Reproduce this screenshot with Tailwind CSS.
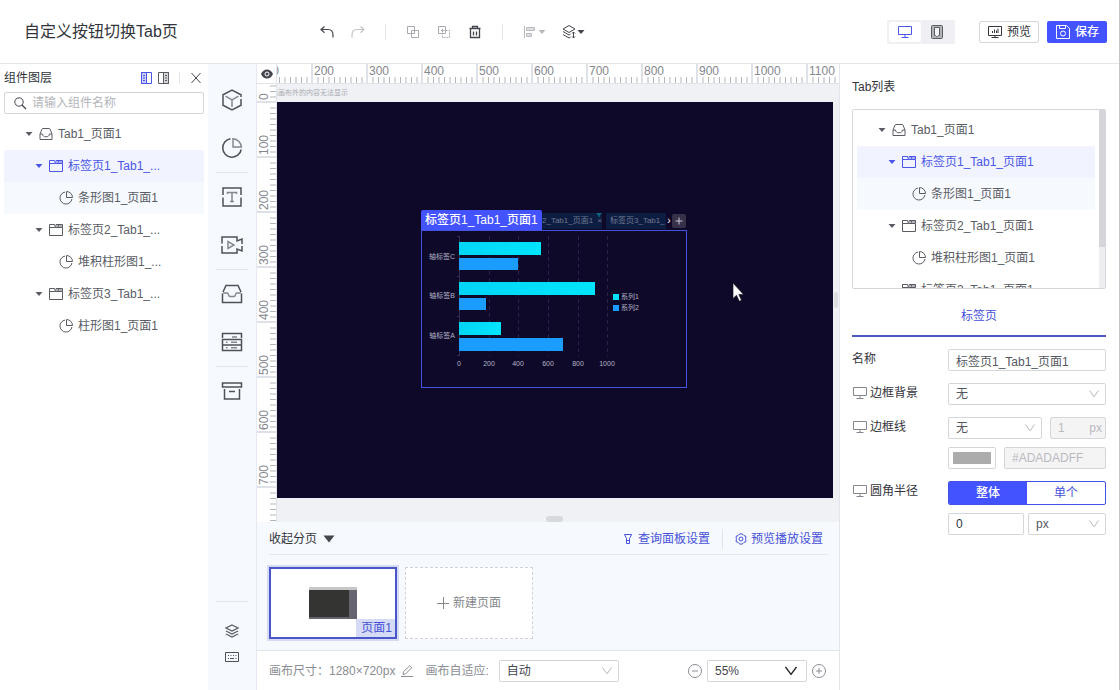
<!DOCTYPE html>
<html lang="zh-CN">

<head>
    <meta charset="UTF-8" />
    <meta name="viewport" content="width=device-width, initial-scale=1.0" />
    <title>自定义按钮切换Tab页</title>
    <script src="https://cdn.jsdelivr.net/npm/@tailwindcss/browser@4"></script>
</head>

<body class="bg-white">
    <svg class="hidden">
        <symbol id="i-caret" viewBox="0 0 8 8"><path d="M0.5 2h7L4 6z" fill="currentColor" /></symbol>
        <symbol id="i-down" viewBox="0 0 12 12"><path d="M1.500 2.500 6 8.800l4.500-6.300" fill="none" stroke="currentColor" /></symbol>
        <symbol id="i-tab" viewBox="0 0 14 14">
            <path d="M1 7v5.500h12V7M1 7l2-5c.2-.4.500-.5.900-.5h6.200c.4 0 .7.100.9.500l2 5M1 7h2.500c.3 2 1.500 2.800 3.500 2.800s3.200-.8 3.500-2.800H13" fill="none" stroke="currentColor" />
        </symbol>
        <symbol id="i-folder" viewBox="0 0 14 14">
            <path d="M5.500 1.500h8v3h-7z" fill="currentColor" opacity=".45" />
            <path d="M.5 12.500v-11h5l1 3h7v8zM.5 4.500h6M7 1.500h6.500v3M9.500 1.500v2" fill="none" stroke="currentColor" />
        </symbol>
        <symbol id="i-pie" viewBox="0 0 14 14">
            <path d="M6 1.100A6 6 0 1 0 12.900 8M7.500.5v6h6a6 6 0 0 0-6-6z" fill="none" stroke="currentColor" />
        </symbol>
        <symbol id="i-screen" viewBox="0 0 14 14">
            <path d="M.5 1.500h13v8H.5zM7 9.500v3M3.500 12.500h7" fill="none" stroke="currentColor" />
        </symbol>
        <symbol id="i-stack" viewBox="0 0 14 14">
            <path d="M7 1 13 4 7 7 1 4zM1 7l6 3 6-3M1 10l6 3 6-3" fill="none" stroke="currentColor" stroke-width="1.200" />
        </symbol>
    </svg>

    <div class="flex h-screen flex-col overflow-hidden border-r border-[#c4c5cb] font-['Liberation_Sans','Noto_Sans_CJK_SC',sans-serif] text-xs text-[#5a5c64]">
        <header class="flex h-16 shrink-0 items-center border-b border-[#e4e5ea]">
            <h1 class="w-[319px] pl-6 text-base text-[#33343c]">自定义按钮切换Tab页</h1>
            <div class="flex items-center gap-[15px]">
                <button aria-label="撤销"><svg class="size-4" viewBox="0 0 16 16" fill="none" stroke="#44464e" stroke-width="1.200"><path d="M5.500 2.500 2 5.500l3.500 3.200M2 5.500h7c3.500 0 5 2 5 5.500v2.500" /></svg></button>
                <button aria-label="重做"><svg class="size-4" viewBox="0 0 16 16" fill="none" stroke="#c3c4c8" stroke-width="1.200"><path d="M10.500 2.500 14 5.500l-3.500 3.200M14 5.500H7c-3.500 0-5 2-5 5.500v2.500" /></svg></button>
                <span class="mx-1 h-4 w-px bg-[#e4e5ea]"></span>
                <button aria-label="组合"><svg class="size-4" viewBox="0 0 16 16" fill="none" stroke="#a9abb0"><path d="M2.500 2.500h7v7h-7zM6.500 6.500h7v7h-7z" /></svg></button>
                <button aria-label="取消组合"><svg class="size-4" viewBox="0 0 16 16" fill="none" stroke="#a9abb0"><path d="M2.500 2.500h7v7h-7zM6.500 5v3.500M5 6.500h3.500" /><path d="M9.500 6.500h4v7h-7v-4" stroke-dasharray="2 1" /></svg></button>
                <button aria-label="删除"><svg class="size-4" viewBox="0 0 16 16" fill="none" stroke="#44464e" stroke-width="1.300"><path d="M2.500 4.500h11M5.500 4V2.500h5V4M3.500 5v8.500h9V5M6.500 7.500v4M9.500 7.500v4" /></svg></button>
                <span class="mx-1 h-4 w-px bg-[#e4e5ea]"></span>
                <button aria-label="对齐" class="flex w-6 items-center text-[#b9babf]"><svg class="size-4 shrink-0" viewBox="0 0 16 16" fill="none" stroke="currentColor"><path d="M2.500 2v12" /><path d="M4.500 3.500h8v3h-8zM4.500 9.500h5v3h-5z" fill="#dcdde0" /></svg><svg class="size-2 shrink-0"><use href="#i-caret" /></svg></button>
                <button aria-label="图层顺序" class="flex w-6 items-center text-[#44464e]"><svg class="size-4 shrink-0" viewBox="0 0 16 16" fill="none" stroke="currentColor"><path d="M8 1.500 14 5 8 8.500 2 5zM2 7.500 8 11l1.500-.8M2 10.500 8 14l1.500-.8M12.500 8v6M11 9.500 12.500 8 14 9.500M11 12.500l1.500 1.500 1.500-1.500" /></svg><svg class="size-2 shrink-0"><use href="#i-caret" /></svg></button>
            </div>
            <div class="ml-auto flex items-center pr-3">
                <div class="mr-6 flex rounded-xs bg-[#f0f0f4] p-0.5">
                    <button aria-label="电脑端" class="flex h-5 w-8 items-center justify-center rounded-xs bg-white text-[#4b56e8]"><svg class="size-3.5"><use href="#i-screen" /></svg></button>
                    <button aria-label="移动端" class="flex h-5 w-8 items-center justify-center"><svg class="h-4 w-3.5" viewBox="0 0 14 16"><rect x="1.500" y="1.500" width="11" height="13" rx="1" fill="#b2b3b8" stroke="#5a5c64" /><path d="M4.500 3.500h5v8h-1l-1 1h-1l-1-1h-1z" fill="#f4f4f6" stroke="#5a5c64" /></svg></button>
                </div>
                <button class="mr-2 flex h-[22px] w-[60px] items-center justify-center gap-1 rounded-xs border border-[#d5d6dc] text-[#33343c]"><svg class="size-4" viewBox="0 0 16 16" fill="none" stroke="currentColor"><path d="M1.500 2.500h13v9h-13zM8 11.500v2M4.500 13.500h7M5.500 9V7M7.500 9V5.500M9.500 9V6.500M11 9V4.500" /></svg>预览</button>
                <button class="flex h-[22px] w-[60px] items-center justify-center gap-1 rounded-xs bg-[#4353ff] font-medium text-white"><svg class="size-4" viewBox="0 0 16 16" fill="none" stroke="currentColor"><path d="M1.500 1.500h10l3 3v10h-13zM4.500 1.500v3h6v-3" /><circle cx="8" cy="9.500" r="2.500" /></svg>保存</button>
            </div>
        </header>

        <main class="flex min-h-0 flex-1">
            <aside class="w-52 shrink-0 px-1">
                <div class="flex h-7 items-center">
                    <h2 class="flex-1 text-[#33343c]">组件图层</h2>
                    <button aria-label="左侧停靠" class="mr-1.5"><svg class="h-3 w-[11px]" viewBox="0 0 11 12" fill="none" stroke="#4b56e8"><path d="M.5.5h5v11h-5z" fill="#c9cdf8" /><path d="M.5.5h10v11H.5zM5.500.5v11M2 3.500h2M2 6h2M2 8.500h2" /></svg></button>
                    <button aria-label="右侧停靠" class="mr-2.5"><svg class="h-3 w-[11px]" viewBox="0 0 11 12" fill="none" stroke="#5a5c64"><path d="M5.500.5h5v11h-5z" fill="#d5d5d8" /><path d="M.5.5h10v11H.5zM5.500.5v11M7 3.500h2M7 6h2M7 8.500h2" /></svg></button>
                    <span class="mr-2.5 h-3 w-px bg-[#e4e5ea]"></span>
                    <button aria-label="关闭" class="mr-0.5"><svg class="size-3" viewBox="0 0 12 12" fill="none" stroke="#44464e"><path d="m1.500 1 9 10M10.500 1l-9 10" /></svg></button>
                </div>
                <label class="flex h-[22px] items-center gap-[5px] rounded-xs border border-[#d5d6dc] pl-2">
                    <svg class="size-3.5 shrink-0" viewBox="0 0 14 14" fill="none" stroke="#44464e"><circle cx="6" cy="6" r="4.200" /><path d="m9 9 4 4" stroke-width="1.300" /></svg>
                    <input class="w-full outline-none placeholder:text-[#b4b5ba]" placeholder="请输入组件名称" aria-label="搜索组件" />
                </label>
                <ul class="mt-1 [&>li]:flex [&>li]:h-8 [&>li]:items-center">
                    <li class="pl-[21px]"><svg class="mr-1.5 size-2"><use href="#i-caret" /></svg><svg class="mr-[5px] size-3.5"><use href="#i-tab" /></svg>Tab1_页面1</li>
                    <li class="bg-[#f1f4fe] pl-[31px] text-[#4b56e8]"><svg class="mr-1.5 size-2"><use href="#i-caret" /></svg><svg class="mr-[5px] size-3.5"><use href="#i-folder" /></svg>标签页1_Tab1_...</li>
                    <li class="bg-[#f6f9fe] pl-[55px]"><svg class="mr-[5px] size-3.5"><use href="#i-pie" /></svg>条形图1_页面1</li>
                    <li class="pl-[31px]"><svg class="mr-1.5 size-2"><use href="#i-caret" /></svg><svg class="mr-[5px] size-3.5"><use href="#i-folder" /></svg>标签页2_Tab1_...</li>
                    <li class="pl-[55px]"><svg class="mr-[5px] size-3.5"><use href="#i-pie" /></svg>堆积柱形图1_...</li>
                    <li class="pl-[31px]"><svg class="mr-1.5 size-2"><use href="#i-caret" /></svg><svg class="mr-[5px] size-3.5"><use href="#i-folder" /></svg>标签页3_Tab1_...</li>
                    <li class="pl-[55px]"><svg class="mr-[5px] size-3.5"><use href="#i-pie" /></svg>柱形图1_页面1</li>
                </ul>
            </aside>

            <nav class="flex w-[49px] shrink-0 flex-col border-r border-[#e6e9f1] bg-[#f6fafe] pt-3 pb-5 [&>button]:flex [&>button]:items-center [&>button]:justify-center">
                <button aria-label="组件" class="h-12"><svg class="size-[22px]" viewBox="0 0 22 22" fill="none" stroke="#4f5159" stroke-width="1.500"><path d="M20 8V5.800L11 1 2 5.800v10.400L11 21l9-4.800V10" /><path d="m4.500 7.200 6.500 3.600 6.500-3.600M11 10.800V18" stroke="#85878e" /></svg></button>
                <button aria-label="图表" class="h-12"><svg class="size-[22px]" viewBox="0 0 22 22" fill="none" stroke="#4f5159" stroke-width="1.500"><path d="M9.500 1.700A9.300 9.300 0 1 0 20.200 12.500" /><path d="M12 1.700V10h8.300A9 9 0 0 0 12 1.700z" stroke="#85878e" /></svg></button>
                <span class="mx-2 h-px shrink-0 bg-[#e1e4ea]"></span>
                <button aria-label="文本" class="h-12"><svg class="size-[22px]" viewBox="0 0 22 22" fill="none" stroke="#4f5159" stroke-width="1.500"><path d="M2 9V2h18v7M2 11.500V20h18v-8.500" /><path d="M6.500 8V6.500h9V8M11 6.500v9M9 15.500h4" stroke="#85878e" /></svg></button>
                <button aria-label="媒体" class="h-12"><svg class="size-[22px]" viewBox="0 0 22 22" fill="none" stroke="#4f5159" stroke-width="1.500"><path d="M1 9.500V3h15v4l5-2v5M1 12v7h15v-4l5 2v-5" /><path d="M7 7.500v7l6-3.500z" stroke="#85878e" /></svg></button>
                <span class="mx-2 h-px shrink-0 bg-[#e1e4ea]"></span>
                <button aria-label="容器" class="h-12"><svg class="size-[22px]" viewBox="0 0 22 22" fill="none" stroke="#4f5159" stroke-width="1.500"><path d="M2 9l3-6.500h12L20 9M1.500 10.500v9h19v-9" /><path d="M2 10h4.500c.7 0 1 3.500 2.500 3.500h4c1.500 0 1.800-3.500 2.500-3.500H20" stroke="#85878e" /></svg></button>
                <button aria-label="控件" class="h-12"><svg class="size-[22px]" viewBox="0 0 22 22" fill="none" stroke="#4f5159" stroke-width="1.500"><path d="M1.500 7V2.500h19V7M1.500 8.500h19v5.500h-19zM1.500 14v5.500h19V14" /><path d="M11 6h5M5 11.300h1.500M10 11.300h6M5 16.800h1.500M10 16.800h6" stroke="#85878e" /></svg></button>
                <span class="mx-2 h-px shrink-0 bg-[#e1e4ea]"></span>
                <button aria-label="素材" class="h-12"><svg class="size-[22px]" viewBox="0 0 22 22" fill="none" stroke="#4f5159" stroke-width="1.500"><path d="M1.500 3h19v4h-19zM3.500 9v10h15V9M8 11.500h6" /></svg></button>
                <span class="mx-2 mt-auto mb-4 h-px shrink-0 bg-[#e1e4ea]"></span>
                <button aria-label="图层" class="h-[26px]"><svg class="size-3.5"><use href="#i-stack" /></svg></button>
                <button aria-label="快捷键" class="h-[26px]"><svg class="h-2.5 w-3.5" viewBox="0 0 14 10" fill="none" stroke="#4f5159"><path d="M.5 .5h13v9H.5zM3 3.500h1M5.500 3.500h1M8 3.500h1M10.500 3.500h1M3 6.500h1M5 6.500h4M10.500 6.500h1" /></svg></button>
            </nav>

            <section class="flex min-w-0 flex-1 flex-col border-r border-[#e4e5ea]">
                <div class="grid min-h-0 flex-1 grid-cols-[20px_minmax(0,1fr)] grid-rows-[20px_minmax(0,1fr)]">
                    <button aria-label="显示参考线" class="flex items-center justify-center border-r border-b border-[#e1e3ea]"><svg class="h-3 w-3.5" viewBox="0 0 14 12"><path d="M1 6c2.500-6 9.500-6 12 0-2.500 6-9.500 6-12 0z" fill="#44464e" /><circle cx="7" cy="6" r="2" fill="none" stroke="#fff" /></svg></button>
                    <svg id="ruler-x" class="h-full w-full border-b border-[#e1e3ea] text-xs"></svg>
                    <svg id="ruler-y" class="h-full w-full border-r border-[#e1e3ea] text-xs"></svg>

                    <div class="relative flex min-w-0 flex-col bg-[#eff1f5] pr-1.5 pb-6">
                        <div class="flex h-[18px] w-[71px] items-center justify-end overflow-hidden text-[7px] whitespace-nowrap text-[#aaabb0]">出画布外的内容无法显示</div>
                        <div class="relative flex-1 bg-[#0f0929]">
                            <!-- tab strip of the selected widget -->
                            <div class="absolute top-[111px] left-[265px] flex h-4 items-center text-[8px] whitespace-nowrap text-[#6f7890]">
                                <span class="relative flex h-full w-[60px] items-center justify-between bg-[#0d1d42]">2_Tab1_页面1<span>×</span><svg class="absolute top-0 right-0 size-1.5" viewBox="0 0 8 8"><path d="M0 0h8L5 3v3L3 4.500V3z" fill="#0e6a80" /></svg></span>
                                <span class="ml-1 flex h-full w-[60px] items-center bg-[#0d1d42] pl-1">标签页3_Tab1_</span>
                                <span class="w-1.5 text-center text-[10px] text-white">›</span>
                                <button aria-label="新增标签页" class="flex size-3.5 items-center justify-center rounded-xs bg-[#373049] text-[#c7c5d0]"><svg class="size-2" viewBox="0 0 8 8" stroke="currentColor"><path d="M4 .5v7M.5 4h7" /></svg></button>
                            </div>
                            <div class="absolute top-[108px] left-36 flex h-5 items-center rounded-t-xs bg-[#4353ff] px-1 font-medium whitespace-nowrap text-white">标签页1_Tab1_页面1</div>
                            <div class="absolute top-32 left-36 border border-[#4353e0]">
                                <svg class="h-[156px] w-[264px]" viewBox="1 1 264 156" font-size="7" fill="#b3b5c6">
                                    <path d="M68.500 6v120M97.500 6v120M127.500 6v120M157.500 6v120M186.500 6v120" stroke="#25244a" stroke-dasharray="4 3" />
                                    <path d="M38.500 6v120M36 6.500h2M36 46.500h2M36 86.500h2M36 125.500h2" stroke="#2f2e52" />
                                    <defs>
                                        <linearGradient id="g1"><stop stop-color="#02d5f7" /><stop offset="1" stop-color="#00e5ff" /></linearGradient>
                                    </defs>
                                    <g fill="url(#g1)">
                                        <rect x="38" y="12" width="82" height="13" />
                                        <rect x="38" y="52" width="136" height="13" />
                                        <rect x="38" y="92" width="42" height="13" />
                                    </g>
                                    <g fill="#1b9dff">
                                        <rect x="38" y="28" width="59" height="12" />
                                        <rect x="38" y="68" width="27" height="12" />
                                        <rect x="38" y="108" width="104" height="13" />
                                    </g>
                                    <g text-anchor="end">
                                        <text x="34" y="29">轴标签C</text>
                                        <text x="34" y="68">轴标签B</text>
                                        <text x="34" y="108">轴标签A</text>
                                    </g>
                                    <g text-anchor="middle">
                                        <text x="38" y="136">0</text>
                                        <text x="68" y="136">200</text>
                                        <text x="97" y="136">400</text>
                                        <text x="127" y="136">600</text>
                                        <text x="157" y="136">800</text>
                                        <text x="186" y="136">1000</text>
                                    </g>
                                    <rect x="192" y="64" width="6" height="6" fill="#00dffb" />
                                    <rect x="192" y="75" width="6" height="6" fill="#1b9dff" />
                                    <text x="200" y="69">系列1</text>
                                    <text x="200" y="80">系列2</text>
                                </svg>
                            </div>
                            <svg class="absolute top-[180px] left-[455px] h-5 w-3" viewBox="0 0 12 20"><path d="M1 1v15.500l3.500-3.300 2.800 6 2.200-1-2.700-5.800h4.700z" fill="#fff" stroke="#0b0b12" stroke-width=".6" /></svg>
                        </div>
                        <span class="absolute top-52 right-px h-4 w-1 rounded bg-[#dcdde1]"></span>
                        <span class="absolute bottom-0 left-[269px] h-1.5 w-[17px] rounded bg-[#d8d9dd]"></span>
                    </div>
                </div>

                <div class="bg-[#f6fafe] pr-[11px] pb-[11px] pl-3">
                    <div class="flex h-[33px] items-center border-b border-[#e4e6ec] pt-px text-[#4650d8]">
                        <button class="mr-auto flex items-center gap-1.5 text-[#33343c]">收起分页<svg class="size-3" viewBox="0 0 12 12"><path d="M.5 2.500h11L6 9.500z" fill="#44464e" /></svg></button>
                        <button class="flex items-center gap-1"><svg class="size-3" viewBox="0 0 12 12" fill="none" stroke="currentColor"><path d="M2.500 1.500h7.200L7.500 5.500v5h-3v-5zM4.500 7.500h3" /></svg>查询面板设置</button>
                        <span class="mx-3 h-5 w-px bg-[#e1e4ea]"></span>
                        <button class="mr-[5px] flex items-center gap-1"><svg class="size-3" viewBox="0 0 12 12" fill="none" stroke="currentColor"><path d="M4 1.500 6 .7l2 .8 1 1.200 1.800.5v2L10.300 6l.5.800v2L9 9.300l-1 1.200-2 .8-2-.8-1-1.200-1.800-.5v-2L1.700 6l-.5-.8v-2L3 2.700z" /><circle cx="6" cy="6" r="2" /></svg>预览播放设置</button>
                    </div>
                    <div class="flex gap-2 pt-3">
                        <button class="relative flex h-[72px] w-32 items-center justify-center border-2 border-[#4a55c8] bg-white ring-2 ring-[#d5daf5]">
                            <span class="flex h-8 w-12 flex-col bg-[#66656f]">
                                <span class="h-[3px] bg-[#c5c8c6]"></span>
                                <span class="mr-2 mb-0.5 flex-1 bg-[#343433]"></span>
                            </span>
                            <span class="absolute right-0 bottom-0 bg-[#d5daf5] pr-[3px] pl-[5px] leading-[18px] text-[#4650d8]">页面1</span>
                        </button>
                        <button class="flex h-[72px] w-32 items-center justify-center gap-1 border border-dashed border-[#d0d2d8] bg-white text-[#85878e]"><svg class="size-3" viewBox="0 0 12 12" stroke="currentColor"><path d="M6.500 0v12M0 6.500h12" /></svg>新建页面</button>
                    </div>
                </div>

                <div class="flex h-10 shrink-0 items-center border-t border-[#e4e5ea] pr-[13px] pl-3 text-[#8b8d94]">
                    <span>画布尺寸：1280×720px</span>
                    <button aria-label="编辑尺寸" class="mr-3 ml-1.5"><svg class="size-3" viewBox="0 0 12 12" fill="none" stroke="currentColor"><path d="M0 11.500h12M2 9.500l.5-2.800L8.700.8l2 2-6 6z" /></svg></button>
                    <label for="fit">画布自适应:</label>
                    <div class="relative ml-2.5 w-[120px]">
                        <select id="fit" class="h-[22px] w-full appearance-none rounded-xs border border-[#d5d6dc] bg-white px-[7px] text-[#44464e]"><option>自动</option></select>
                        <svg class="pointer-events-none absolute top-[5px] right-1.5 size-3 text-[#b5b6bb]"><use href="#i-down" /></svg>
                    </div>
                    <button aria-label="缩小" class="ml-auto"><svg class="size-3.5" viewBox="0 0 14 14" fill="none" stroke="currentColor"><circle cx="7" cy="7" r="6.500" /><path d="M4 7h6" /></svg></button>
                    <div class="relative mx-[5px] w-[100px]">
                        <select aria-label="缩放比例" class="h-[22px] w-full appearance-none rounded-xs border border-[#d5d6dc] bg-white px-[7px] text-[#44464e]"><option>55%</option></select>
                        <svg class="pointer-events-none absolute top-[5px] right-2.5 size-3 text-[#23242c]" viewBox="0 0 12 12"><path d="M.5 2 6 9.500 11.500 2" fill="none" stroke="currentColor" stroke-width="1.300" /></svg>
                    </div>
                    <button aria-label="放大"><svg class="size-3.5" viewBox="0 0 14 14" fill="none" stroke="currentColor"><circle cx="7" cy="7" r="6.500" /><path d="M4 7h6M7 4v6" /></svg></button>
                </div>
            </section>

            <aside class="w-[279px] shrink-0 pr-[13px] pl-3">
                <h2 class="flex h-[45px] items-center text-[#33343c]">Tab列表</h2>
                <div class="flex h-[180px] rounded-xs border border-[#d5d6dc]">
                    <ul class="flex-1 overflow-hidden pt-1 pr-1 pl-1 [&>li]:flex [&>li]:h-8 [&>li]:items-center">
                        <li class="pl-[21px]"><svg class="mr-1.5 size-2"><use href="#i-caret" /></svg><svg class="mr-[5px] size-3.5"><use href="#i-tab" /></svg>Tab1_页面1</li>
                        <li class="bg-[#f1f4fe] pl-[31px] text-[#4b56e8]"><svg class="mr-1.5 size-2"><use href="#i-caret" /></svg><svg class="mr-[5px] size-3.5"><use href="#i-folder" /></svg>标签页1_Tab1_页面1</li>
                        <li class="bg-[#f6f9fe] pl-[55px]"><svg class="mr-[5px] size-3.5"><use href="#i-pie" /></svg>条形图1_页面1</li>
                        <li class="pl-[31px]"><svg class="mr-1.5 size-2"><use href="#i-caret" /></svg><svg class="mr-[5px] size-3.5"><use href="#i-folder" /></svg>标签页2_Tab1_页面1</li>
                        <li class="pl-[55px]"><svg class="mr-[5px] size-3.5"><use href="#i-pie" /></svg>堆积柱形图1_页面1</li>
                        <li class="pl-[31px]"><svg class="mr-1.5 size-2"><use href="#i-caret" /></svg><svg class="mr-[5px] size-3.5"><use href="#i-folder" /></svg>标签页3_Tab1_页面1</li>
                    </ul>
                    <div class="w-1.5 bg-[#eeeef0]"><div class="h-[137px] bg-[#d6d6da]"></div></div>
                </div>
                <h3 class="flex h-12 items-center justify-center border-b-2 border-[#5057c0] pt-2 text-[#4650d8]">标签页</h3>

                <form class="mt-3 grid grid-cols-[96px_minmax(0,1fr)] gap-y-3 text-[#33343c]">
                    <label for="name" class="leading-5">名称</label>
                    <input id="name" value="标签页1_Tab1_页面1" class="h-[22px] w-full rounded-xs border border-[#d5d6dc] px-[7px] text-[#55575f]" />

                    <label for="bg" class="flex h-5 items-center gap-[3px]"><svg class="ml-px size-3.5 text-[#85878e]"><use href="#i-screen" /></svg>边框背景</label>
                    <div class="relative">
                        <select id="bg" class="h-[22px] w-full appearance-none rounded-xs border border-[#d5d6dc] px-[7px] text-[#55575f]"><option>无</option></select>
                        <svg class="pointer-events-none absolute top-[5px] right-1.5 size-3 text-[#b5b6bb]"><use href="#i-down" /></svg>
                    </div>

                    <label for="line" class="flex h-5 items-center gap-[3px]"><svg class="ml-px size-3.5 text-[#85878e]"><use href="#i-screen" /></svg>边框线</label>
                    <div class="flex flex-col gap-2">
                        <div class="flex gap-2">
                            <div class="relative min-w-0 flex-1">
                                <select id="line" class="h-[22px] w-full appearance-none rounded-xs border border-[#d5d6dc] px-[7px] text-[#55575f]"><option>无</option></select>
                                <svg class="pointer-events-none absolute top-[5px] right-1.5 size-3 text-[#b5b6bb]"><use href="#i-down" /></svg>
                            </div>
                            <label class="flex h-[22px] w-14 shrink-0 items-center rounded-xs border border-[#d5d6dc] bg-[#f4f4f5] pr-[3px] pl-[7px] text-[#b9babf]">
                                <input disabled value="1" aria-label="边框线宽度" class="w-full min-w-0" />px
                            </label>
                        </div>
                        <div class="flex gap-2">
                            <button type="button" aria-label="边框线颜色" class="h-[22px] w-12 shrink-0 rounded-xs border border-[#d5d6dc] p-1"><span class="block h-full bg-[#acacac]"></span></button>
                            <input disabled value="#ADADADFF" aria-label="颜色值" class="h-[22px] min-w-0 flex-1 rounded-xs border border-[#d5d6dc] bg-[#f4f4f5] px-[7px] text-[#b9babf]" />
                        </div>
                    </div>

                    <label for="radius" class="flex h-5 items-center gap-[3px]"><svg class="ml-px size-3.5 text-[#85878e]"><use href="#i-screen" /></svg>圆角半径</label>
                    <div class="flex flex-col gap-2">
                        <div class="grid h-6 grid-cols-2 overflow-hidden rounded-xs border border-[#4353e8]">
                            <button type="button" class="bg-[#4353ff] font-medium text-white">整体</button>
                            <button type="button" class="text-[#4650d8]">单个</button>
                        </div>
                        <div class="flex gap-1">
                            <input id="radius" value="0" class="h-[22px] w-[76px] rounded-xs border border-[#d5d6dc] px-[7px]" />
                            <div class="relative min-w-0 flex-1">
                                <select aria-label="单位" class="h-[22px] w-full appearance-none rounded-xs border border-[#d5d6dc] px-[7px] text-[#55575f]"><option>px</option></select>
                                <svg class="pointer-events-none absolute top-[5px] right-1.5 size-3 text-[#b5b6bb]"><use href="#i-down" /></svg>
                            </div>
                        </div>
                    </div>
                </form>
            </aside>
        </main>
    </div>

    <script>
        // 55px on screen = 100 canvas units
        const ruler = function(id, opts) {
            const step = 55;
            const vert = opts.vert || false;
            const el = document.querySelector(id);
            const line = (p, from, color, w) =>
                vert ?
                `<path d="M${from} ${p}H19" stroke="${color}" stroke-width="${w}"/>` :
                `<path d="M${p} ${from}V19" stroke="${color}" stroke-width="${w}"/>`;

            const draw = () => {
                const size = vert ? el.clientHeight : el.clientWidth;
                let html = "";
                for (let p = opts.start, n = opts.first; p < size; p += step, n += 100) {
                    // ticks before the first label too
                    for (let i = n === opts.first ? -9 : 1; i < 10; i++) {
                        if (i) html += line(p + i * 5.5 + 0.5, 13, "#b4b5bb", 1);
                    }
                    html += line(p, 0, "#dfe1e8", 2);
                    html += vert ?
                        `<text transform="translate(11 ${p - 2}) rotate(-90)" fill="#85878e">${n}</text>` :
                        `<text x="${p + 2}" y="11" fill="#85878e">${n}</text>`;
                }
                el.innerHTML = html;
            };

            draw();
            new ResizeObserver(draw).observe(el);
        };

        ruler("#ruler-x", { start: -20, first: 100 });
        ruler("#ruler-y", { start: 18, first: 0, vert: true });
    </script>
</body>

</html>
